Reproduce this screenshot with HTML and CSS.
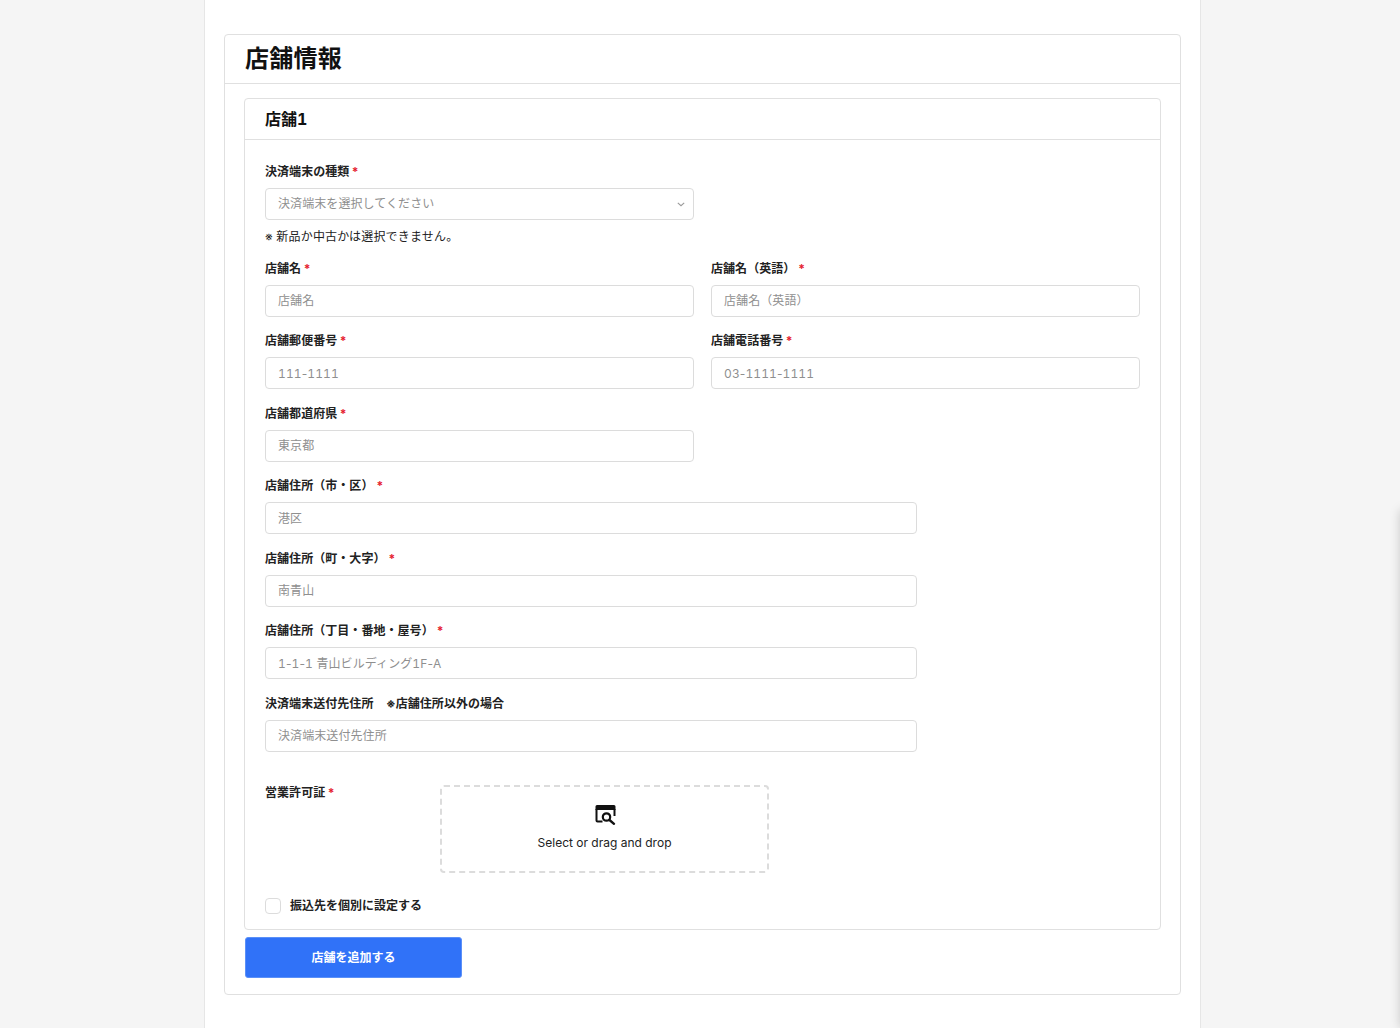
FILE: index.html
```html
<!DOCTYPE html>
<html lang="ja">
<head>
<meta charset="utf-8">
<title>店舗情報</title>
<link rel="stylesheet" href="styles.css">
</head>
<body>
<main class="page">
  <section class="card">
    <h1 class="card-title">店舗情報</h1>
    <div class="card-body">
      <div class="store">
        <h2 class="store-title">店舗1</h2>
        <div class="store-body">
          <div class="grid">
            <div class="field">
              <label class="label">決済端末の種類<span class="req">*</span></label>
              <div class="control select"><span>決済端末を選択してください</span>
                <svg class="chev" viewBox="0 0 10 6" width="8" height="5"><path d="M1 1l4 3.500L9 1" fill="none" stroke="#9a9a9a" stroke-width="1.400"/></svg>
              </div>
              <p class="note">※ 新品か中古かは選択できません。</p>
            </div>
          </div>
          <div class="grid">
            <div class="field"><label class="label">店舗名<span class="req">*</span></label><div class="control">店舗名</div></div>
            <div class="field"><label class="label">店舗名（英語）<span class="req wide">*</span></label><div class="control">店舗名（英語）</div></div>
            <div class="field"><label class="label">店舗郵便番号<span class="req">*</span></label><div class="control num">111<span class="hy">-</span>1111</div></div>
            <div class="field"><label class="label">店舗電話番号<span class="req">*</span></label><div class="control num">03<span class="hy">-</span>1111<span class="hy">-</span>1111</div></div>
            <div class="field"><label class="label">店舗都道府県<span class="req">*</span></label><div class="control">東京都</div></div>
          </div>
          <div class="wide-fields">
            <div class="field"><label class="label">店舗住所（市・区）<span class="req wide">*</span></label><div class="control">港区</div></div>
            <div class="field"><label class="label">店舗住所（町・大字）<span class="req wide">*</span></label><div class="control">南青山</div></div>
            <div class="field"><label class="label">店舗住所（丁目・番地・屋号）<span class="req wide">*</span></label><div class="control num">1<span class="hy">-</span>1<span class="hy">-</span>1<span class="hy"> </span>青山ビルディング1F<span class="hy">-</span>A</div></div>
            <div class="field"><label class="label">決済端末送付先住所<span class="sub">※店舗住所以外の場合</span></label><div class="control">決済端末送付先住所</div></div>
          </div>
          <div class="upload-row">
            <label class="label upload-label">営業許可証<span class="req">*</span></label>
            <div class="dropzone">
              <svg class="drop-icon" viewBox="0 0 22 22" width="22" height="22">
                <path d="M3 1h17a1.500 1.500 0 0 1 1.500 1.500V6h-20V2.500A1.500 1.500 0 0 1 3 1z" fill="#111"/>
                <path d="M2.500 5v11.500a1 1 0 0 0 1 1h5M20.500 5v7" fill="none" stroke="#111" stroke-width="2"/>
                <circle cx="12.500" cy="13" r="3.700" fill="none" stroke="#111" stroke-width="2.200"/>
                <path d="M15.500 16l4.500 3.800" stroke="#111" stroke-width="2.400" stroke-linecap="round"/>
              </svg>
              <span class="drop-text">Select or drag and drop</span>
            </div>
          </div>
          <div class="check-row">
            <span class="checkbox"></span>
            <span class="check-label">振込先を個別に設定する</span>
          </div>
        </div>
      </div>
      <button class="add-btn" type="button">店舗を追加する</button>
    </div>
  </section>
</main>
<div class="edge-shadow"></div>
</body>
</html>
```
FILE: styles.css
```css
* { box-sizing: border-box; }
html, body { margin: 0; height: 1028px; overflow: hidden; }
body {
  background: #f5f5f5;
  color: #1c1c1c;
  font-family: Inter, "Noto Sans CJK JP", sans-serif;
  font-variant-numeric: tabular-nums;
  position: relative;
}
.page {
  width: 997px;
  height: 1028px;
  margin-left: 204px;
  padding: 34px 19px 0;
  background: #fff;
  border-left: 1px solid #e6e6e6;
  border-right: 1px solid #e6e6e6;
}
.card {
  width: 957px;
  height: 961px;
  border: 1px solid #e0e0e0;
  border-radius: 4px;
  background: #fff;
}
.card-title {
  margin: 0;
  height: 49px;
  padding: 0 20px;
  border-bottom: 1px solid #e0e0e0;
  font-size: 24px;
  line-height: 48px;
  font-weight: 700;
  letter-spacing: 0.25px;
  color: #111;
}
.card-body { padding: 14px 19px 0; }
.store {
  width: 917px;
  height: 832px;
  border: 1px solid #e0e0e0;
  border-radius: 4px;
}
.store-title {
  margin: 0;
  height: 41px;
  padding: 0 20px;
  border-bottom: 1px solid #e0e0e0;
  font-size: 16px;
  line-height: 40px;
  font-weight: 700;
  color: #111;
}
.store-body { padding: 23px 20px 0; }
.grid {
  display: grid;
  grid-template-columns: 429px 429px;
  column-gap: 17px;
  row-gap: 15.500px;
}
.wide-fields {
  display: flex;
  flex-direction: column;
  gap: 15.500px;
  width: 652px;
  margin-top: 15.500px;
}
.label {
  display: block;
  height: 18px;
  margin-bottom: 7px;
  font-size: 12px;
  line-height: 18px;
  font-weight: 700;
  letter-spacing: 0.05px;
  color: #222;
}
.req { color: #e5202e; margin-left: 2px; }
.req.wide { margin-left: 2.500px; }
.sub { margin-left: 12.500px; }
.control {
  height: 32px;
  padding: 0.2px 12px 0;
  border: 1px solid #dcdcdc;
  border-radius: 4px;
  background: #fff;
  font-size: 12px;
  line-height: 30px;
  letter-spacing: 0.08px;
  color: #8f8f8f;
}
.num { letter-spacing: 0.1px; }
.hy { font-variant-numeric: normal; }
.select {
  display: flex;
  align-items: center;
  justify-content: space-between;
  padding-right: 8px;
}
.note {
  margin: 8px 0 0;
  height: 18px;
  font-size: 12px;
  line-height: 18px;
  letter-spacing: 0.2px;
  color: #222;
}
.grid + .grid { margin-top: 13.900px; }
.upload-row {
  display: flex;
  margin-top: 33px;
}
.upload-label { width: 175px; margin: -1px 0 0; }
.dropzone {
  width: 329px;
  height: 88px;
  border: 2px dashed #dcdcdc;
  border-radius: 4px;
  display: flex;
  flex-direction: column;
  align-items: center;
  padding-top: 17px;
}
.drop-icon { display: block; }
.drop-text {
  margin-top: 8px;
  font-size: 12px;
  line-height: 18px;
  letter-spacing: 0.03px;
  color: #222;
}
.check-row {
  display: flex;
  align-items: center;
  gap: 9px;
  margin-top: 24px;
}
.checkbox {
  width: 16px;
  height: 16px;
  border: 1px solid #dcdcdc;
  border-radius: 4px;
  background: #fff;
}
.check-label {
  font-size: 12px;
  line-height: 18px;
  font-weight: 700;
  color: #222;
}
.add-btn {
  display: block;
  width: 217px;
  height: 41px;
  margin: 7px 0 0 1px;
  border: 1px solid #5b90f8;
  border-radius: 3px;
  background: #3072f8;
  color: #fff;
  font: 700 12px/18px Inter, "Noto Sans CJK JP", sans-serif;
}
.edge-shadow {
  position: absolute;
  left: 1400px;
  top: 510px;
  width: 300px;
  height: 518px;
  box-shadow: 0 0 10px rgba(0, 0, 0, 0.18);
}
```
